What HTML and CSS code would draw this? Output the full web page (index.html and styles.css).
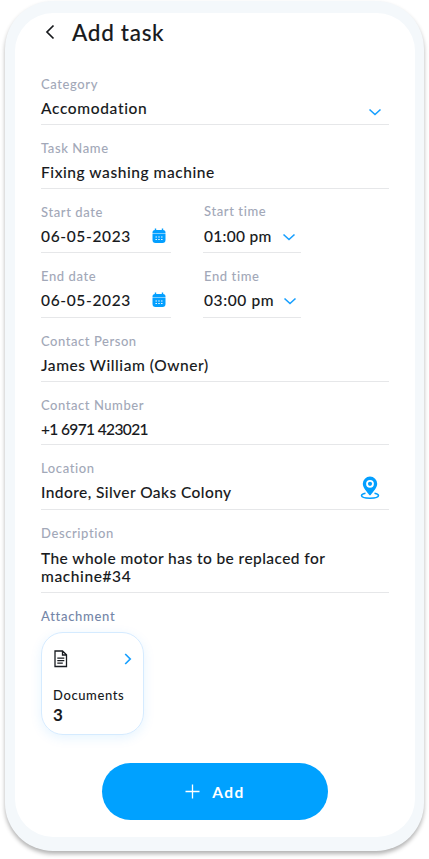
FILE: index.html
```html
<!DOCTYPE html>
<html lang="en">
<head>
<meta charset="utf-8">
<title>Add task</title>
<link rel="stylesheet" href="styles.css">
</head>
<body>
<main class="phone">
  <div class="screen">
    <header class="header">
      <svg class="back" width="10" height="16" viewBox="0 0 10 16"><path d="M8.500 1.500 2 8l6.500 6.500"/></svg>
      <h1>Add task</h1>
    </header>
    <section class="field category">
      <div class="label">Category</div>
      <div class="value"><span>Accomodation</span><svg class="chevron" width="14" height="9" viewBox="0 0 14 9"><path d="m1.500 1.500 5.500 5 5.500-5"/></svg></div>
    </section>
    <section class="field task">
      <div class="label">Task Name</div>
      <div class="value"><span>Fixing washing machine</span></div>
    </section>
    <div class="pair pair-start">
      <section class="field date">
        <div class="label">Start date</div>
        <div class="value"><span>06-05-2023</span><svg class="calendar" width="14" height="16" viewBox="0 0 14 16"><path d="M3.500 .5v3M10.500 .5v3" stroke="#039fff" stroke-width="1.400"/><path fill="#039fff" d="M3 2h8q2.500 0 2.500 2.500v1h-13v-1Q.5 2 3 2ZM.5 6.100h13V12q0 3-3 3h-7q-3 0-3-3Z"/><path d="M3.500 9h7M3.500 11.500h7" stroke="#fff" stroke-width="1.200" stroke-dasharray="1.400 1.400"/></svg></div>
      </section>
      <section class="field time">
        <div class="label">Start time</div>
        <div class="value"><span>01:00 pm</span><svg class="chevron" width="14" height="9" viewBox="0 0 14 9"><path d="m1.500 1.500 5.500 5 5.500-5"/></svg></div>
      </section>
    </div>
    <div class="pair pair-end">
      <section class="field date">
        <div class="label">End date</div>
        <div class="value"><span>06-05-2023</span><svg class="calendar" width="14" height="16" viewBox="0 0 14 16"><path d="M3.500 .5v3M10.500 .5v3" stroke="#039fff" stroke-width="1.400"/><path fill="#039fff" d="M3 2h8q2.500 0 2.500 2.500v1h-13v-1Q.5 2 3 2ZM.5 6.100h13V12q0 3-3 3h-7q-3 0-3-3Z"/><path d="M3.500 9h7M3.500 11.500h7" stroke="#fff" stroke-width="1.200" stroke-dasharray="1.400 1.400"/></svg></div>
      </section>
      <section class="field time">
        <div class="label">End time</div>
        <div class="value"><span>03:00 pm</span><svg class="chevron" width="14" height="9" viewBox="0 0 14 9"><path d="m1.500 1.500 5.500 5 5.500-5"/></svg></div>
      </section>
    </div>
    <section class="field person">
      <div class="label">Contact Person</div>
      <div class="value"><span>James William (Owner)</span></div>
    </section>
    <section class="field number">
      <div class="label">Contact Number</div>
      <div class="value"><span>+1 6971 423021</span></div>
    </section>
    <section class="field location">
      <div class="label">Location</div>
      <div class="value"><span>Indore, Silver Oaks Colony</span><svg class="pin" width="20" height="24" viewBox="0 0 20 24"><path d="M5.500 17.300C3 17.700 1.500 18.600 1.500 19.600c0 1.600 3.800 2.700 8.500 2.700s8.500-1.100 8.500-2.700c0-1-1.500-1.900-4-2.300" fill="none" stroke="#039fff" stroke-width="1.500"/><path fill="#039fff" fill-rule="evenodd" d="M10 .6a7.200 7.200 0 0 1 7.200 7.200c0 4.200-4.200 8-6.500 11.200q-.7.900-1.400 0C7 15.800 2.800 12 2.800 7.800A7.200 7.200 0 0 1 10 .6Zm0 3.300a3.900 3.900 0 1 0 0 7.800 3.900 3.900 0 0 0 0-7.800Z"/><circle cx="10" cy="7.800" r="2.100" fill="#039fff"/></svg></div>
    </section>
    <section class="field description">
      <div class="label">Description</div>
      <div class="value"><span>The whole motor has to be replaced for<br><span class="line-two">machine#34</span></span></div>
    </section>
    <section class="attachment">
      <h2>Attachment</h2>
      <div class="card">
        <div class="card-icons">
          <svg width="15" height="18" viewBox="0 0 15 18" fill="none" stroke="#171b20" stroke-width="1.300"><path d="M2 1h7.500l4 3.800V16.500H2ZM9.500 1v4h4M4.300 8.200h7M4.300 10.700h7M4.300 13.200h5.500"/></svg>
          <svg class="next" width="8" height="12" viewBox="0 0 8 12"><path d="m1.200 1 5 5-5 5"/></svg>
        </div>
        <div class="card-title">Documents</div>
        <div class="card-count">3</div>
      </div>
    </section>
    <button class="add"><svg width="15" height="15" viewBox="0 0 15 15"><path d="M7.500 .5v14M.5 7.500h14" stroke="#fff" stroke-width="1.300"/></svg><span>Add</span></button>
  </div>
</main>
</body>
</html>
```
FILE: styles.css
```css
* { box-sizing: border-box; }
body {
  margin: 0;
  height: 859px;
  overflow: hidden;
  background: #fff;
  color: #181a1d;
  font-family: Lato, "Liberation Sans", sans-serif;
}
h1, h2 { margin: 0; font-weight: 500; }
svg { flex: none; display: block; }
.phone {
  width: 419px;
  height: 850px;
  margin: 1px 0 0 5px;
  padding: 12px 9px 14px 10px;
  border-radius: 48px;
  background: #f4f8fb;
  box-shadow: 0 3px 4px rgba(0, 0, 0, .3);
}
.screen {
  height: 824px;
  padding: 0 26px;
  border-radius: 38px;
  background: #fff;
}
.header {
  height: 48px;
  padding: 4px 0 0 4px;
  display: flex;
  align-items: flex-start;
  gap: 17px;
}
.header h1 {
  padding-top: 1px;
  font-size: 22.5px;
  line-height: 30px;
  letter-spacing: .7px;
  -webkit-text-stroke: .1px currentColor;
}
.back { margin-top: 7px; fill: none; stroke: #181a1d; stroke-width: 1.7; }
.field {
  height: 64px;
  padding-top: 15px;
  border-bottom: 1px solid #e6e7e9;
}
.label {
  height: 16px;
  line-height: 16px;
  font-size: 13px;
  font-weight: 500;
  letter-spacing: .6px;
  color: #a2a8b8;
}
.value {
  margin-top: 7px;
  min-height: 18px;
  display: flex;
  line-height: 18px;
  font-size: 15.5px;
  font-weight: 500;
  letter-spacing: .43px;
  white-space: nowrap;
  -webkit-text-stroke: .08px currentColor;
}
.chevron { margin-top: 9px; fill: none; stroke: #169fff; stroke-width: 1.6; }
.category .value, .date .value { letter-spacing: .65px; }
.task .value, .person .value { letter-spacing: .56px; }
.category .chevron { margin-left: auto; margin-right: 7px; }
.pair { display: grid; grid-template-columns: 130px 98px; column-gap: 32px; }
.pair-start .time .label { position: relative; top: -1px; }
.pair-end .field { height: 65px; }
.date .value, .time .value { justify-content: space-between; }
.date .value { padding-right: 5px; }
.time .value { padding-right: 4px; }
.pair-start .time .value { padding-right: 5px; }
.time .label { letter-spacing: .6px; padding-left: 1px; }
.time .value { margin-left: 1px; letter-spacing: .3px; }
.pair-end .time .value { letter-spacing: .6px; }
.time .chevron { margin-top: 6px; }
.pair .calendar { margin-top: 1px; }
.number { height: 63px; }
.number .value { letter-spacing: -.63px; }
.number .label { letter-spacing: .55px; }
.person .label { letter-spacing: .55px; }
.location { height: 65px; }
.pin { margin: -7px 9px 0 auto; }
.description { height: 83px; }
.description .value { margin-top: 8px; }
.line-two { letter-spacing: .6px; }
.attachment h2 {
  padding-top: 15px;
  line-height: 16px;
  font-size: 13px;
  letter-spacing: .7px;
  color: #7486a8;
}
.card {
  width: 103px;
  height: 103px;
  margin-top: 8px;
  padding: 17px 11px 0;
  border: 1px solid #d5ebff;
  border-radius: 22px;
  box-shadow: 0 3px 12px rgba(0, 150, 255, .1);
}
.card-icons { display: flex; justify-content: space-between; }
.next { margin-top: 3px; fill: none; stroke: #169fff; stroke-width: 1.7; }
.card-title { margin-top: 18px; font-size: 13px; line-height: 18px; font-weight: 500; letter-spacing: .6px; }
.card-count { font-size: 17px; line-height: 22px; font-weight: 700; }
.add {
  width: 226px;
  height: 57px;
  margin: 28px 0 0 61px;
  padding: 0;
  border: 0;
  border-radius: 29px;
  display: flex;
  align-items: center;
  justify-content: center;
  gap: 12px;
  color: #fff;
  background: #00a1ff;
  font: 700 15.5px Lato, sans-serif;
  letter-spacing: 1.4px;
}
```
